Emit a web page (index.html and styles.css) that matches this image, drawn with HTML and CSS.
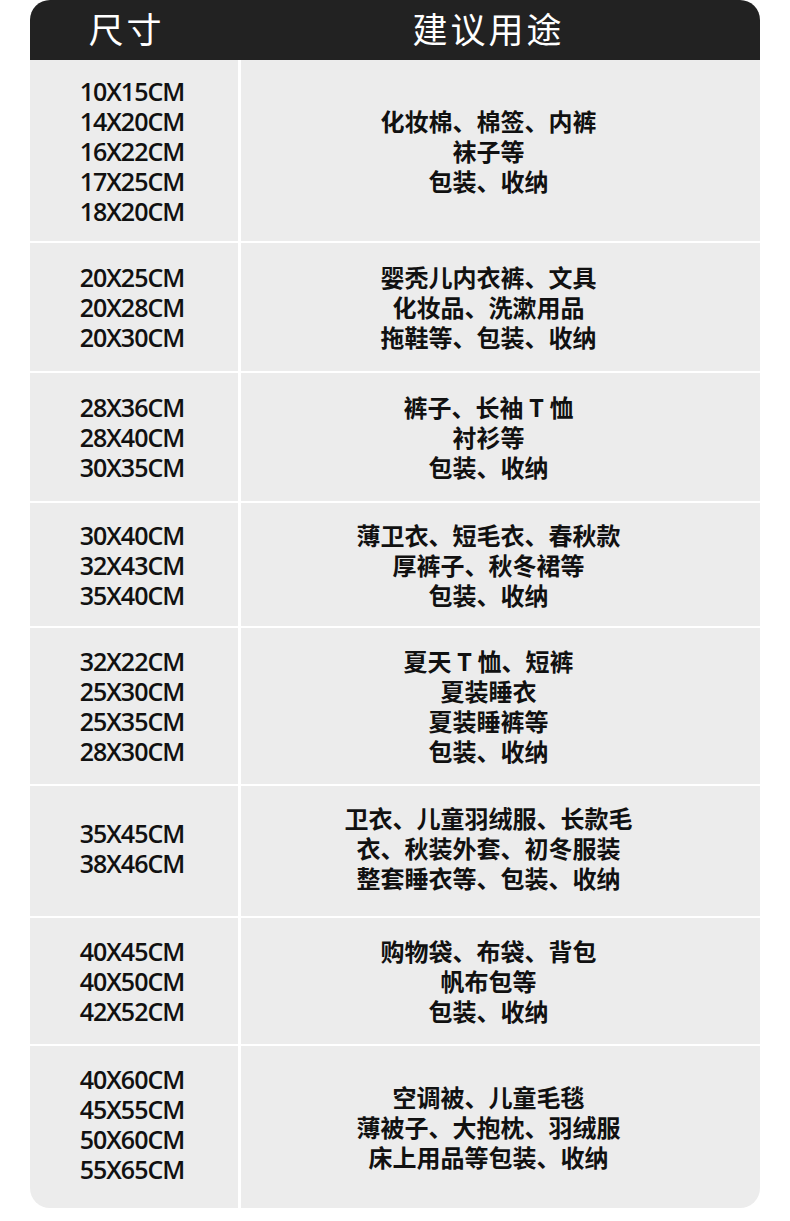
FILE: index.html
```html
<!DOCTYPE html>
<html lang="zh">
<head>
<meta charset="utf-8">
<link rel="stylesheet" href="styles.css">
</head>
<body>
<div class="table">
  <div class="head">
    <div class="hcell size-h">尺寸</div>
    <div class="hcell use-h">建议用途</div>
  </div>
  <div class="grid">
    <div class="cell size r1">10X15CM<br>14X20CM<br>16X22CM<br>17X25CM<br>18X20CM</div>
    <div class="cell use">化妆棉、棉签、内裤<br>袜子等<br>包装、收纳</div>

    <div class="cell size">20X25CM<br>20X28CM<br>20X30CM</div>
    <div class="cell use">婴秃儿内衣裤、文具<br>化妆品、洗漱用品<br>拖鞋等、包装、收纳</div>

    <div class="cell size">28X36CM<br>28X40CM<br>30X35CM</div>
    <div class="cell use">裤子、长袖 T 恤<br>衬衫等<br>包装、收纳</div>

    <div class="cell size">30X40CM<br>32X43CM<br>35X40CM</div>
    <div class="cell use">薄卫衣、短毛衣、春秋款<br>厚裤子、秋冬裙等<br>包装、收纳</div>

    <div class="cell size">32X22CM<br>25X30CM<br>25X35CM<br>28X30CM</div>
    <div class="cell use">夏天 T 恤、短裤<br>夏装睡衣<br>夏装睡裤等<br>包装、收纳</div>

    <div class="cell size up">35X45CM<br>38X46CM</div>
    <div class="cell use up">卫衣、儿童羽绒服、长款毛<br>衣、秋装外套、初冬服装<br>整套睡衣等、包装、收纳</div>

    <div class="cell size">40X45CM<br>40X50CM<br>42X52CM</div>
    <div class="cell use">购物袋、布袋、背包<br>帆布包等<br>包装、收纳</div>

    <div class="cell size up">40X60CM<br>45X55CM<br>50X60CM<br>55X65CM</div>
    <div class="cell use">空调被、儿童毛毯<br>薄被子、大抱枕、羽绒服<br>床上用品等包装、收纳</div>
  </div>
</div>
</body>
</html>
```
FILE: styles.css
```css
html, body {
  margin: 0;
  padding: 0;
  background: #ffffff;
}
body {
  width: 790px;
  height: 1221px;
  overflow: hidden;
}
.table {
  margin-left: 30px;
  width: 730px;
  border-radius: 20px;
  overflow: hidden;
  background: #ffffff;
}
.head {
  display: flex;
  height: 60px;
  background: #222222;
}
.hcell {
  display: flex;
  align-items: center;
  justify-content: center;
  color: #ffffff;
  font-family: "Noto Sans CJK SC", sans-serif;
  font-size: 35px;
  letter-spacing: 3px;
  padding-bottom: 6px;
  box-sizing: border-box;
}
.size-h {
  width: 211px;
  padding-right: 18px;
}
.use-h {
  flex: 1;
  padding-right: 24px;
}
.grid {
  display: grid;
  grid-template-columns: 208px 519px;
  grid-template-rows: 181px 128px 128px 123px 156px 130px 126px 162px;
  column-gap: 3px;
  row-gap: 2px;
}
.cell {
  background: #ececec;
  display: flex;
  align-items: center;
  justify-content: center;
  text-align: center;
  color: #111111;
}
.size {
  font-family: "Open Sans", sans-serif;
  font-weight: 600;
  font-size: 25px;
  line-height: 30px;
  letter-spacing: -1px;
  padding-right: 4px;
}
.use {
  font-family: "Noto Sans CJK SC", sans-serif;
  font-weight: 700;
  font-size: 24px;
  line-height: 30px;
  padding-right: 24px;
}
.up {
  padding-bottom: 6px;
}
```
